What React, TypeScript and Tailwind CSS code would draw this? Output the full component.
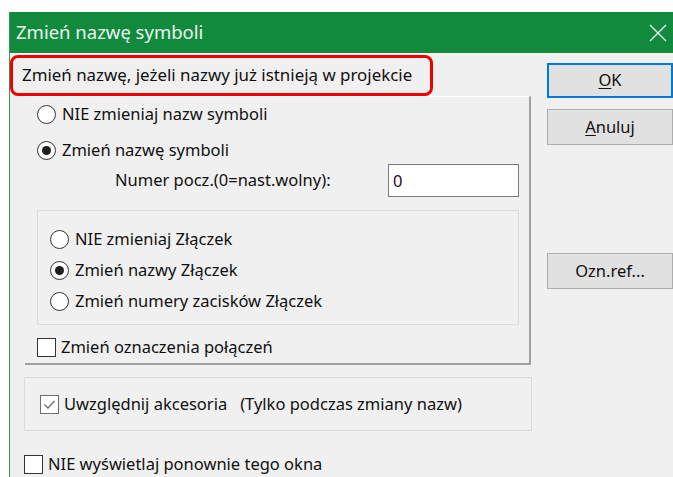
import React, { useState } from 'react';

const font = "font-['Noto_Sans',_'DejaVu_Sans',_sans-serif]";

const Radio: React.FC<{ checked: boolean; label: string; onSelect: () => void }> = ({ checked, label, onSelect }) => (
  <div className="flex h-[22px] cursor-default items-center" onClick={onSelect}>
    <span className="flex h-[19px] w-[19px] items-center justify-center rounded-full border border-[#333333] bg-white">
      {checked && <span className="h-[9px] w-[9px] rounded-full bg-[#1f1f1f]" />}
    </span>
    <span className="ml-[6px] whitespace-nowrap">{label}</span>
  </div>
);

const Check: React.FC<{ checked: boolean; label: React.ReactNode; onToggle: () => void; muted?: boolean }> = ({
  checked,
  label,
  onToggle,
  muted,
}) => (
  <div className="flex h-[22px] cursor-default items-center" onClick={onToggle}>
    <span
      className={`flex h-[19px] w-[19px] items-center justify-center border bg-white ${
        muted ? 'border-[#6d6d6d]' : 'border-[#333333]'
      }`}
    >
      {checked && (
        <svg width="15" height="15" viewBox="0 0 15 15">
          <path d="M2.5 7.5 L6 11 L12.5 4" fill="none" stroke={muted ? '#6d6d6d' : '#222'} strokeWidth="1.3" />
        </svg>
      )}
    </span>
    <span className="ml-[5px] whitespace-nowrap">{label}</span>
  </div>
);

const Button: React.FC<{ children: React.ReactNode; primary?: boolean; className?: string }> = ({ children, primary, className }) => (
  <button
    className={`flex w-[126px] items-center justify-center bg-[#e1e1e1] text-[#111] ${
      primary ? 'border-2 border-[#0078d7]' : 'border border-[#adadad]'
    } ${className ?? ''}`}
  >
    {children}
  </button>
);

export default function App() {
  const [symbolMode, setSymbolMode] = useState(1);
  const [terminalMode, setTerminalMode] = useState(1);
  const [renameConnections, setRenameConnections] = useState(false);
  const [accessories, setAccessories] = useState(true);
  const [dontShow, setDontShow] = useState(false);
  const [startNumber, setStartNumber] = useState('0');

  return (
    <div className={`h-[477px] w-[673px] overflow-hidden bg-white text-[16.5px] text-[#111] ${font}`}>
      <div className="h-[12px]" />
      <div className="ml-[9px] flex h-[465px] flex-col border-l border-[#2f9a57]">
        {/* title bar */}
        <div className="flex h-[41px] shrink-0 items-center justify-between bg-[#128a3e] pl-[6px] pr-[5px]">
          <span className="pb-[2px] text-[18.5px] text-[#eaf6ee]">Zmień nazwę symboli</span>
          <svg width="18" height="18" viewBox="0 0 18 18" className="mr-[1px]">
            <path d="M1 1 L17 17 M17 1 L1 17" stroke="#eaf6ee" strokeWidth="1.3" />
          </svg>
        </div>

        <div className="flex flex-1 bg-[#f0f0f0]">
          {/* left column */}
          <div className="flex w-[537px] flex-col">
            <div className="mt-[2px] flex h-[41px] w-[423px] items-center rounded-[8px] border-[3px] border-[#f00000] pl-[9px]">
              <span className="pb-[1px] text-[16.9px]">Zmień nazwę, jeżeli nazwy już istnieją w projekcie</span>
            </div>

            <div className="ml-[15px] flex h-[269px] w-[506px] flex-col border-b-2 border-r-2 border-t border-b-[#a0a0a0] border-r-[#a0a0a0] border-t-white pl-[12px] pr-[10px] pt-[6px]">
              <Radio checked={symbolMode === 0} label="NIE zmieniaj nazw symboli" onSelect={() => setSymbolMode(0)} />
              <div className="mt-[14px]">
                <Radio checked={symbolMode === 1} label="Zmień nazwę symboli" onSelect={() => setSymbolMode(1)} />
              </div>
              <div className="mt-[3px] flex h-[33px] items-center">
                <span className="ml-[78px] w-[273px] whitespace-nowrap">Numer pocz.(0=nast.wolny):</span>
                <input
                  value={startNumber}
                  onChange={(e) => setStartNumber(e.target.value)}
                  className="h-[33px] w-[131px] border border-[#7a7a7a] bg-white px-[4px] text-[16.5px] text-[#2a0a3a] outline-none"
                />
              </div>

              <div className="mt-[13px] flex h-[115px] w-[482px] flex-col border border-[#dcdcdc] pl-[12px] pt-[17px]">
                <Radio checked={terminalMode === 0} label="NIE zmieniaj Złączek" onSelect={() => setTerminalMode(0)} />
                <div className="mt-[9px]">
                  <Radio checked={terminalMode === 1} label="Zmień nazwy Złączek" onSelect={() => setTerminalMode(1)} />
                </div>
                <div className="mt-[9px]">
                  <Radio
                    checked={terminalMode === 2}
                    label="Zmień numery zacisków Złączek"
                    onSelect={() => setTerminalMode(2)}
                  />
                </div>
              </div>

              <div className="mt-[11px]">
                <Check
                  checked={renameConnections}
                  label="Zmień oznaczenia połączeń"
                  onToggle={() => setRenameConnections(!renameConnections)}
                />
              </div>
            </div>

            <div className="ml-[14px] mt-[12px] flex h-[54px] w-[508px] items-center border border-[#dcdcdc] pl-[15px]">
              <Check
                checked={accessories}
                muted
                onToggle={() => setAccessories(!accessories)}
                label={
                  <>
                    Uwzględnij akcesoria<span className="ml-[13px]">(Tylko podczas zmiany nazw)</span>
                  </>
                }
              />
            </div>

            <div className="ml-[14px] mt-[22px]">
              <Check checked={dontShow} label="NIE wyświetlaj ponownie tego okna" onToggle={() => setDontShow(!dontShow)} />
            </div>
          </div>

          {/* right column */}
          <div className="flex flex-col pl-[1px] pt-[10px]">
            <Button primary className="h-[35px]">
              <span>
                <span className="underline underline-offset-2">O</span>K
              </span>
            </Button>
            <Button className="mt-[11px] h-[36px]">
              <span>
                <span className="underline underline-offset-2">A</span>nuluj
              </span>
            </Button>
            <Button className="mt-[108px] h-[36px]">Ozn.ref...</Button>
          </div>
        </div>
      </div>
    </div>
  );
}
